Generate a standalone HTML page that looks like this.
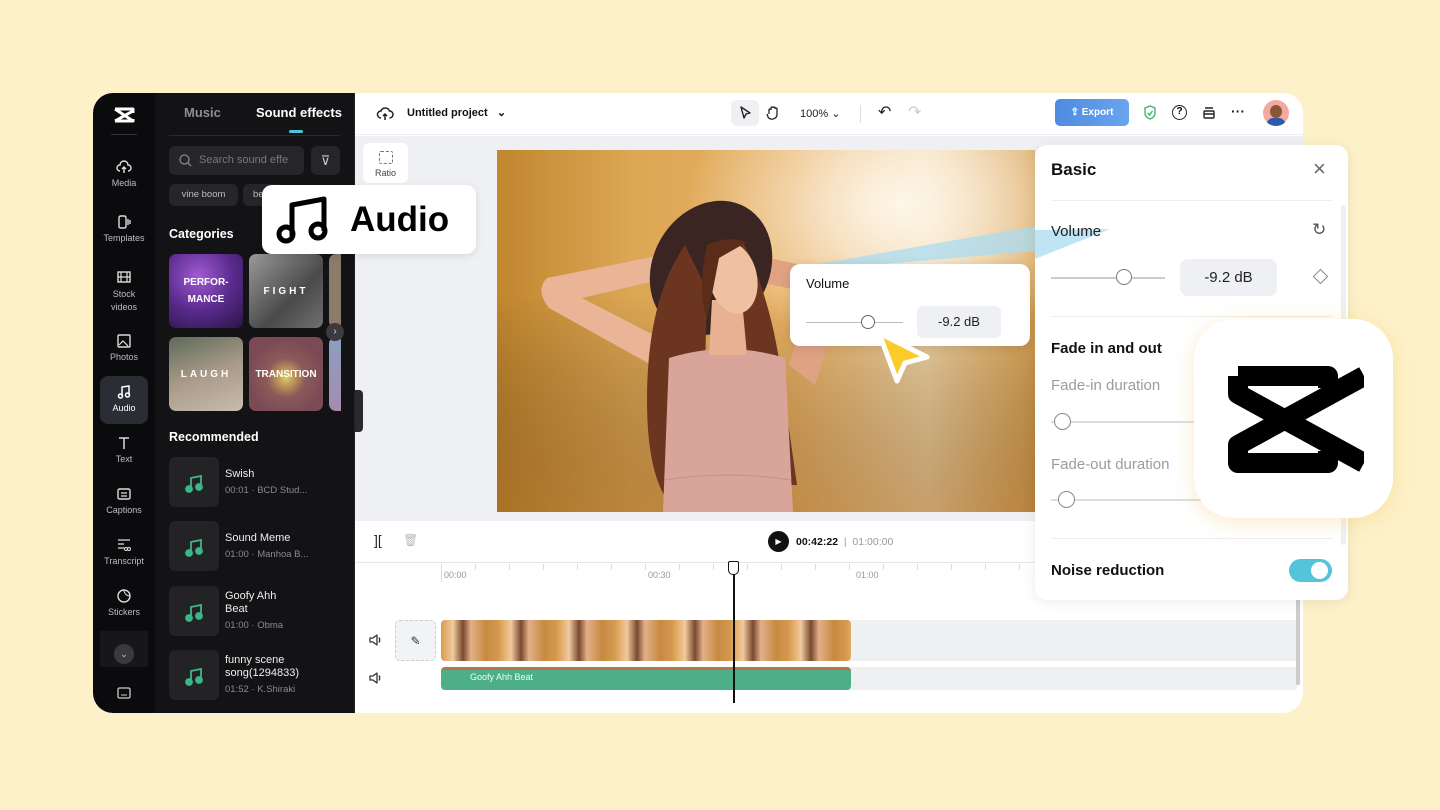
<!DOCTYPE html>
<html><head><meta charset="utf-8"><style>
*{box-sizing:border-box;margin:0;padding:0}
body{width:1440px;height:810px;background:#fdf1c9;font-family:"Liberation Sans",sans-serif;position:relative;overflow:hidden}
.a{position:absolute}
.win{left:93px;top:93px;width:1210px;height:620px;border-radius:20px;overflow:hidden;background:#fff}
.nav{left:0;top:0;width:62px;height:620px;background:#0b0b0d}
.ni{position:absolute;left:0;width:62px;text-align:center;color:#bdbdc2;font-size:9px}
.ni svg{display:block;margin:0 auto 3px}
.sp{left:62px;top:0;width:200px;height:620px;background:#131316;border-right:1px solid #222}
.w{color:#fff}
.tile{position:absolute;width:74px;height:74px;border-radius:7px;color:#fff;font-size:10px;font-weight:bold;display:flex;align-items:center;justify-content:center;text-align:center;line-height:17px}
.rec{position:absolute;left:14px;width:200px;height:52px}
.rec .ic{position:absolute;left:0;top:0;width:50px;height:50px;background:#232326;border-radius:6px}
.rec .t{position:absolute;left:56px;color:#eee;font-size:11px;line-height:13px}
.rec .s{position:absolute;left:56px;color:#8a8a8f;font-size:9.5px}
</style></head><body>
<div class="a win">
 <div class="a nav">
  <svg class="a" style="left:19px;top:12px" width="24" height="22" viewBox="0 0 24 22"><path d="M3 4h18v4M3 4v0L21 16M21 6L3 16v0M3 16h18v-2" stroke="#fff" stroke-width="3" fill="none" stroke-linejoin="round"/></svg>
  <div class="a" style="left:18px;top:41px;width:26px;height:1px;background:#333"></div>
  <div class="ni" style="top:66px"><svg width="16" height="16" viewBox="0 0 16 16"><path d="M4 12a3 3 0 0 1 0-6a4 4 0 0 1 8 0a3 3 0 0 1 0 6M8 14V8M6 10l2-2l2 2" stroke="#ddd" fill="none" stroke-width="1.4"/></svg>Media</div>
  <div class="ni" style="top:121px"><svg width="16" height="16" viewBox="0 0 16 16"><rect x="3" y="2" width="7" height="12" rx="1.5" stroke="#ddd" fill="none" stroke-width="1.4"/><path d="M12 5v6M14 6v4" stroke="#ddd" stroke-width="1.4"/></svg>Templates</div>
  <div class="ni" style="top:176px;line-height:13px"><svg width="16" height="16" viewBox="0 0 16 16"><rect x="2" y="3" width="12" height="10" stroke="#ddd" fill="none" stroke-width="1.4"/><path d="M5 3v10M11 3v10M2 8h12" stroke="#ddd" stroke-width="1.2"/></svg>Stock<br>videos</div>
  <div class="ni" style="top:240px"><svg width="16" height="16" viewBox="0 0 16 16"><rect x="2" y="2" width="12" height="12" rx="1" stroke="#ddd" fill="none" stroke-width="1.4"/><path d="M3 12l4-4l5 5" stroke="#ddd" fill="none" stroke-width="1.2"/></svg>Photos</div>
  <div class="a" style="left:7px;top:283px;width:48px;height:48px;border-radius:8px;background:#2a2d33"></div>
  <div class="ni" style="top:291px;color:#fff"><svg width="16" height="16" viewBox="0 0 16 16"><path d="M6 12V3l7-1v9" stroke="#fff" fill="none" stroke-width="1.5"/><circle cx="4.5" cy="12" r="2" stroke="#fff" fill="none" stroke-width="1.5"/><circle cx="11.5" cy="11" r="2" stroke="#fff" fill="none" stroke-width="1.5"/></svg>Audio</div>
  <div class="ni" style="top:342px"><svg width="16" height="16" viewBox="0 0 16 16"><path d="M3 3h10M8 3v11" stroke="#ddd" stroke-width="1.5"/></svg>Text</div>
  <div class="ni" style="top:393px"><svg width="16" height="16" viewBox="0 0 16 16"><rect x="2" y="3" width="12" height="10" rx="1.5" stroke="#ddd" fill="none" stroke-width="1.4"/><path d="M5 7h6M5 10h6" stroke="#ddd" stroke-width="1.2"/></svg>Captions</div>
  <div class="ni" style="top:444px"><svg width="16" height="16" viewBox="0 0 16 16"><path d="M2 3h12M2 7h6M2 11h6" stroke="#ddd" stroke-width="1.3"/><circle cx="10" cy="12" r="1.5" stroke="#ddd" fill="none"/><circle cx="13" cy="12" r="1.5" stroke="#ddd" fill="none"/></svg>Transcript</div>
  <div class="ni" style="top:495px"><svg width="16" height="16" viewBox="0 0 16 16"><circle cx="8" cy="8" r="6" stroke="#ddd" fill="none" stroke-width="1.4"/><path d="M8 2a6 6 0 0 0 6 6" stroke="#ddd" fill="none"/></svg>Stickers</div>
  <div class="a" style="left:7px;top:538px;width:48px;height:36px;background:#17171a"></div>
  <div class="a" style="left:21px;top:551px;width:20px;height:20px;border-radius:50%;background:#3a3a3e;color:#ccc;font-size:9px;text-align:center;line-height:20px">⌄</div>
  <svg class="a" style="left:24px;top:594px" width="14" height="12" viewBox="0 0 14 12"><rect x="1" y="1" width="12" height="10" rx="1.5" stroke="#ccc" fill="none" stroke-width="1.3"/><path d="M4 8h6" stroke="#ccc"/></svg>
 </div>
 <div class="a sp">
  <div class="a" style="left:29px;top:12px;color:#8d8d92;font-size:13px;font-weight:bold">Music</div>
  <div class="a w" style="left:101px;top:12px;font-size:13px;font-weight:bold">Sound effects</div>
  <div class="a" style="left:134px;top:37px;width:14px;height:3px;border-radius:2px;background:#4ec3dc"></div>
  <div class="a" style="left:14px;top:42px;width:171px;height:1px;background:#2a2a2d"></div>
  <div class="a" style="left:14px;top:53px;width:135px;height:29px;border-radius:6px;background:#26262a;color:#77777c;font-size:11px;line-height:29px;padding-left:30px">Search sound effe</div>
  <svg class="a" style="left:24px;top:61px" width="13" height="13" viewBox="0 0 13 13"><circle cx="5.5" cy="5.5" r="4.5" stroke="#888" fill="none" stroke-width="1.3"/><path d="M9 9l3 3" stroke="#888" stroke-width="1.3"/></svg>
  <div class="a" style="left:156px;top:53px;width:29px;height:29px;border-radius:6px;background:#26262a;color:#ccc;font-size:13px;text-align:center;line-height:29px">⊽</div>
  <div class="a" style="left:14px;top:91px;width:69px;height:22px;border-radius:6px;background:#26262a;color:#bbb;font-size:9.5px;text-align:center;line-height:22px">vine boom</div>
  <div class="a" style="left:88px;top:91px;width:40px;height:22px;border-radius:6px;background:#26262a;color:#bbb;font-size:9.5px;line-height:22px;padding-left:10px">be</div>
  <div class="a w" style="left:14px;top:134px;font-size:12.5px;font-weight:bold">Categories</div>
  <div class="tile" style="left:14px;top:161px;background:radial-gradient(circle at 40% 30%,#a15bd3,#5a2b8e 50%,#2b1445)">PERFOR-<br>MANCE</div>
  <div class="tile" style="left:94px;top:161px;background:linear-gradient(135deg,#9a9a9a,#4a4a4a 60%,#707070);letter-spacing:3px">FIGHT</div>
  <div class="tile" style="left:174px;top:161px;width:12px;background:#8c7a6a;border-radius:7px 0 0 7px"></div>
  <div class="tile" style="left:14px;top:244px;background:linear-gradient(160deg,#5e6a5a,#a99a88 50%,#c8bcae);letter-spacing:3px">LAUGH</div>
  <div class="tile" style="left:94px;top:244px;background:radial-gradient(circle at 50% 55%,#d8cf6a 0,#c5a05a 12%,#8d5a5a 35%,#7a4a55 70%)">TRANSITION</div>
  <div class="tile" style="left:174px;top:244px;width:12px;background:linear-gradient(#8aa0c0,#a88ab0);border-radius:7px 0 0 7px"></div>
  <div class="a" style="left:171px;top:230px;width:18px;height:18px;border-radius:50%;background:#3a3a3f;color:#ddd;font-size:10px;text-align:center;line-height:18px">›</div>
  <div class="a w" style="left:14px;top:337px;font-size:12.5px;font-weight:bold">Recommended</div>
  <div class="rec" style="top:364px"><div class="ic"></div><div class="t" style="top:11px">Swish</div><div class="s" style="top:28px">00:01 · BCD Stud...</div></div>
  <div class="rec" style="top:428px"><div class="ic"></div><div class="t" style="top:11px">Sound Meme</div><div class="s" style="top:28px">01:00 · Manhoa B...</div></div>
  <div class="rec" style="top:493px"><div class="ic"></div><div class="t" style="top:4px">Goofy Ahh<br>Beat</div><div class="s" style="top:34px">01:00 · Obma</div></div>
  <div class="rec" style="top:557px"><div class="ic"></div><div class="t" style="top:4px">funny scene<br>song(1294833)</div><div class="s" style="top:34px">01:52 · K.Shiraki</div></div>
 </div>
 <svg class="a" style="left:92px;top:381px" width="20" height="260" viewBox="0 0 20 260">
  <g fill="#3cb58a" stroke="#3cb58a" stroke-width="1.8"><g id="n"><path d="M6 15V4l10-2v11" fill="none"/><circle cx="4" cy="15" r="3"/><circle cx="14" cy="13" r="3"/></g>
  <use href="#n" y="64"/><use href="#n" y="129"/><use href="#n" y="193"/></g>
 </svg>
 <div class="a" style="left:262px;top:0;width:948px;height:42px;background:#fff;border-bottom:1px solid #eceef1"></div>
 <svg class="a" style="left:283px;top:12px" width="18" height="18" viewBox="0 0 18 18"><path d="M5 13a3.5 3.5 0 0 1 0-7a4.5 4.5 0 0 1 8.5 0a3.5 3.5 0 0 1 0 7M9 15V9M7 11l2-2l2 2" stroke="#222" fill="none" stroke-width="1.5"/></svg>
 <div class="a" style="left:314px;top:13px;font-size:11px;font-weight:bold;color:#111">Untitled project &nbsp;&nbsp;⌄</div>
 <div class="a" style="left:638px;top:7px;width:28px;height:26px;border-radius:6px;background:#eef0f3"></div>
 <svg class="a" style="left:645px;top:13px" width="14" height="14" viewBox="0 0 14 14"><path d="M3 1l9 6l-4 1l-2 4z" stroke="#222" fill="none" stroke-width="1.4" stroke-linejoin="round"/></svg>
 <svg class="a" style="left:673px;top:12px" width="14" height="16" viewBox="0 0 14 16"><path d="M3 9V5a1 1 0 0 1 2 0V3a1 1 0 0 1 2 0v0a1 1 0 0 1 2 0v1a1 1 0 0 1 2 0v6a5 5 0 0 1-9 2l-1-3" stroke="#222" fill="none" stroke-width="1.3"/></svg>
 <div class="a" style="left:707px;top:14px;font-size:11px;color:#222">100% ⌄</div>
 <div class="a" style="left:767px;top:12px;width:1px;height:18px;background:#ddd"></div>
 <div class="a" style="left:785px;top:9px;font-size:16px;color:#222">↶</div>
 <div class="a" style="left:815px;top:9px;font-size:16px;color:#ccc">↷</div>
 <div class="a" style="left:962px;top:6px;width:74px;height:27px;border-radius:5px;background:linear-gradient(90deg,#4f8be0,#6aa4ee);color:#fff;font-size:10px;font-weight:bold;text-align:center;line-height:27px">⇪ Export</div>
 <svg class="a" style="left:1050px;top:12px" width="14" height="16" viewBox="0 0 14 16"><path d="M7 1l5 2v5c0 3-2 5-5 6c-3-1-5-3-5-6V3z" stroke="#3cb56a" fill="none" stroke-width="1.4"/><path d="M4.5 8l2 2l3-4" stroke="#3cb56a" fill="none" stroke-width="1.4"/></svg>
 <div class="a" style="left:1079px;top:12px;width:15px;height:15px;border:1.5px solid #222;border-radius:50%;font-size:10px;font-weight:bold;text-align:center;line-height:12px">?</div>
 <svg class="a" style="left:1109px;top:13px" width="14" height="14" viewBox="0 0 14 14"><rect x="2" y="5" width="10" height="7" rx="1" stroke="#222" fill="none" stroke-width="1.4"/><path d="M3 2h8M2 8h10" stroke="#222" stroke-width="1.4"/></svg>
 <div class="a" style="left:1138px;top:10px;font-size:14px;font-weight:bold;color:#222">···</div>
 <div class="a" style="left:1170px;top:7px;width:26px;height:26px;border-radius:50%;background:#f3a9a0;overflow:hidden"><div class="a" style="left:7px;top:5px;width:12px;height:13px;border-radius:50%;background:#8a5638"></div><div class="a" style="left:4px;top:18px;width:18px;height:10px;border-radius:6px 6px 0 0;background:#2a5ab0"></div></div>
 <div class="a" style="left:262px;top:43px;width:948px;height:385px;background:#eef0f3"></div>
 <div class="a" style="left:270px;top:50px;width:45px;height:40px;border-radius:6px;background:#fff;text-align:center;font-size:9px;color:#444;padding-top:8px"><div style="width:14px;height:13px;border:1.2px dashed #777;border-radius:2px;margin:0 auto 4px"></div>Ratio</div>
 <div class="a" style="left:262px;top:297px;width:8px;height:42px;border-radius:0 4px 4px 0;background:#2a2a2e"></div>
 <svg class="a" style="left:404px;top:57px" width="538" height="362" viewBox="0 0 538 362">
  <defs><linearGradient id="bg" x1="0" y1="0" x2="1" y2="0"><stop offset="0" stop-color="#c1862e"/><stop offset=".25" stop-color="#dca654"/><stop offset=".55" stop-color="#e8b165"/><stop offset=".8" stop-color="#f0d3a3"/><stop offset="1" stop-color="#d9a253"/></linearGradient>
  <radialGradient id="lt" cx=".75" cy=".15" r=".4"><stop offset="0" stop-color="#fff8ec" stop-opacity=".95"/><stop offset="1" stop-color="#fff" stop-opacity="0"/></radialGradient>
  <linearGradient id="bot" x1="0" y1="0" x2="0" y2="1"><stop offset=".4" stop-color="#000" stop-opacity="0"/><stop offset="1" stop-color="#8a5418" stop-opacity=".4"/></linearGradient></defs>
  <rect width="538" height="362" fill="url(#bg)"/><rect width="538" height="362" fill="url(#lt)"/><rect width="538" height="362" fill="url(#bot)"/>
  <path d="M200 98L50 128Q38 140 52 158L160 218L178 196L85 148L205 120Z" fill="#e9b596"/>
  <path d="M258 105L318 118Q340 128 338 170L318 235L292 215L308 160L300 140L262 132Z" fill="#dfa283"/>
  <ellipse cx="214" cy="118" rx="58" ry="70" transform="rotate(30 214 118)" fill="#3b2523"/>
  <path d="M188 95Q150 150 150 250Q150 320 170 350L205 345L210 140Z" fill="#6b3520"/>
  <path d="M245 90Q275 150 285 230Q295 300 300 335L262 335L240 150Z" fill="#6b3520"/>
  <path d="M172 208Q230 190 288 208L296 362H166Z" fill="#d9a59a"/>
  <path d="M168 330Q230 320 294 330" stroke="#c4908a" fill="none"/>
  <path d="M215 150L245 150L250 205L212 205Z" fill="#e8b192"/>
  <ellipse cx="236" cy="128" rx="24" ry="36" transform="rotate(-12 236 128)" fill="#f0c0a2"/>
  <path d="M210 95Q230 85 250 92L222 108L210 170Q200 140 210 95Z" fill="#5a2c1a"/>
 </svg>
 <!-- beam -->
 <svg class="a" style="left:719px;top:130px" width="224" height="50" viewBox="0 0 224 50"><path d="M0 42L224 3V28L60 42Z" fill="#a9dcf2" opacity=".75"/></svg>
 <div class="a" style="left:697px;top:171px;width:240px;height:82px;border-radius:10px;background:#fff;box-shadow:0 2px 10px rgba(0,0,0,.12)">
  <div class="a" style="left:16px;top:12px;font-size:13px;color:#111">Volume</div>
  <div class="a" style="left:16px;top:58px;width:97px;height:1px;background:#bbb"></div>
  <div class="a" style="left:71px;top:51px;width:14px;height:14px;border-radius:50%;background:#fff;border:1.5px solid #666"></div>
  <div class="a" style="left:127px;top:42px;width:84px;height:32px;border-radius:6px;background:#eef0f3;font-size:13px;color:#222;text-align:center;line-height:32px">-9.2 dB</div>
 </div>
 <svg class="a" style="left:778px;top:234px" width="65" height="60" viewBox="0 0 65 60"><path d="M8 6L56 30L34 36L26 54Z" fill="#fbcb2c" stroke="#fff" stroke-width="5" stroke-linejoin="round"/></svg>
 <div class="a" style="left:262px;top:428px;width:948px;height:42px;background:#fff;border-bottom:1px solid #e6e8eb"></div>
 <div class="a" style="left:281px;top:439px;font-size:14px;color:#222">][</div>
 <div class="a" style="left:310px;top:440px;font-size:12px;color:#bbb">🗑</div>
 <div class="a" style="left:675px;top:438px;width:21px;height:21px;border-radius:50%;background:#111;color:#fff;font-size:8px;text-align:center;line-height:21px">▶</div>
 <div class="a" style="left:703px;top:443px;font-size:10.5px;font-weight:bold;color:#111">00:42:22 <span style="font-weight:normal;color:#999">&nbsp;|&nbsp; 01:00:00</span></div>
 <div class="a" style="left:348px;top:471px;width:1px;height:18px;background:#ddd"></div>
 <div class="a" style="left:351px;top:477px;font-size:9px;color:#999">00:00</div>
 <div class="a" style="left:555px;top:477px;font-size:9px;color:#999">00:30</div>
 <div class="a" style="left:763px;top:477px;font-size:9px;color:#999">01:00</div>
 <div class="a" style="left:348px;top:471px;width:620px;height:6px;background:repeating-linear-gradient(90deg,#ddd 0 1px,transparent 1px 34px)"></div>
 <div class="a" style="left:302px;top:527px;width:41px;height:41px;border-radius:5px;border:1px dashed #ccc;background:#f2f3f5;text-align:center;line-height:40px;font-size:12px;color:#333">✎</div>
 <svg class="a" style="left:275px;top:540px" width="14" height="14" viewBox="0 0 14 14"><path d="M2 5h3l4-3v10l-4-3H2z" stroke="#333" fill="none" stroke-width="1.3" stroke-linejoin="round"/><path d="M11 4.5q1.5 2.5 0 5" stroke="#333" fill="none" stroke-width="1.3"/></svg>
 <svg class="a" style="left:275px;top:578px" width="14" height="14" viewBox="0 0 14 14"><path d="M2 5h3l4-3v10l-4-3H2z" stroke="#333" fill="none" stroke-width="1.3" stroke-linejoin="round"/><path d="M11 4.5q1.5 2.5 0 5" stroke="#333" fill="none" stroke-width="1.3"/></svg>
 <div class="a" style="left:348px;top:527px;width:856px;height:41px;background:#eef0f2;border-radius:3px"></div>
 <div class="a" style="left:348px;top:527px;width:410px;height:41px;border-radius:4px;background:repeating-linear-gradient(90deg,#d99c4a 0,#f0caa0 12px,#7a4a30 22px,#e2b08a 30px,#c88a40 45px,#d49a52 58px)"></div>
 <div class="a" style="left:348px;top:574px;width:856px;height:23px;background:#eef0f2;border-radius:3px"></div>
 <div class="a" style="left:348px;top:574px;width:410px;height:23px;border-radius:4px;background:#4daf88;border-top:3px solid #c2704a"></div>
 <div class="a" style="left:377px;top:579px;font-size:9px;color:#eafff4">Goofy Ahh Beat</div>
 <div class="a" style="left:640px;top:470px;width:1.5px;height:140px;background:#111"></div>
 <div class="a" style="left:635px;top:468px;width:11px;height:14px;border:1.5px solid #111;border-radius:2px 2px 5px 5px;background:#fff"></div>
 <div class="a" style="left:1203px;top:500px;width:4px;height:92px;border-radius:2px;background:#ccc"></div>
</div>
<div class="a" style="left:262px;top:185px;width:214px;height:69px;border-radius:10px;background:#fff;box-shadow:0 2px 8px rgba(0,0,0,.1)"></div>
<svg class="a" style="left:276px;top:196px" width="54" height="48" viewBox="0 0 54 48"><path d="M16 40V9l32-6v32" stroke="#000" stroke-width="5" fill="none" stroke-linejoin="round"/><circle cx="10" cy="38" r="7" stroke="#000" stroke-width="5" fill="none"/><circle cx="42" cy="35" r="7" stroke="#000" stroke-width="5" fill="none"/></svg>
<div class="a" style="left:350px;top:200px;font-size:35px;font-weight:bold;color:#000">Audio</div>
<div class="a" style="left:1035px;top:145px;width:313px;height:455px;border-radius:12px;background:#fff;box-shadow:0 2px 14px rgba(0,0,0,.08)">
 <div class="a" style="left:16px;top:15px;font-size:17px;font-weight:bold;color:#111">Basic</div>
 <div class="a" style="left:278px;top:11px;font-size:22px;color:#666">×</div>
 <div class="a" style="left:16px;top:55px;width:282px;height:1px;background:#eee"></div>
 <div class="a" style="left:306px;top:60px;width:5px;height:340px;background:#eef0f2;border-radius:3px"></div>
 <svg class="a" style="left:0;top:78px" width="75" height="40" viewBox="0 0 75 40"><path d="M0 7L75 6L0 36Z" fill="#a9dcf2" opacity=".75"/></svg>
 <div class="a" style="left:16px;top:78px;font-size:15px;color:#222">Volume</div>
 <div class="a" style="left:277px;top:75px;font-size:17px;color:#555">↻</div>
 <div class="a" style="left:16px;top:132px;width:114px;height:1.5px;background:#ccc"></div>
 <div class="a" style="left:81px;top:124px;width:16px;height:16px;border-radius:50%;background:#fff;border:1.5px solid #777"></div>
 <div class="a" style="left:145px;top:114px;width:97px;height:37px;border-radius:8px;background:#eef0f3;font-size:15px;color:#222;text-align:center;line-height:37px">-9.2 dB</div>
 <div class="a" style="left:280px;top:126px;width:11px;height:11px;border:1.3px solid #888;transform:rotate(45deg)"></div>
 <div class="a" style="left:16px;top:171px;width:282px;height:1px;background:#eee"></div>
 <div class="a" style="left:16px;top:195px;font-size:15px;font-weight:bold;color:#111">Fade in and out</div>
 <div class="a" style="left:16px;top:232px;font-size:15px;color:#9a9ca2">Fade-in duration</div>
 <div class="a" style="left:16px;top:276px;width:160px;height:2px;background:#ddd"></div>
 <div class="a" style="left:19px;top:268px;width:17px;height:17px;border-radius:50%;background:#fff;border:1.5px solid #888"></div>
 <div class="a" style="left:16px;top:311px;font-size:15px;color:#9a9ca2">Fade-out duration</div>
 <div class="a" style="left:16px;top:354px;width:160px;height:2px;background:#ddd"></div>
 <div class="a" style="left:23px;top:346px;width:17px;height:17px;border-radius:50%;background:#fff;border:1.5px solid #888"></div>
 <div class="a" style="left:16px;top:393px;width:282px;height:1px;background:#eee"></div>
 <div class="a" style="left:16px;top:417px;font-size:15px;font-weight:bold;color:#111">Noise reduction</div>
 <div class="a" style="left:254px;top:414px;width:43px;height:23px;border-radius:12px;background:#55c3d9"><div class="a" style="left:22px;top:3px;width:17px;height:17px;border-radius:50%;background:#fff"></div></div>
</div>
<div class="a" style="left:1194px;top:319px;width:199px;height:199px;border-radius:40px;background:#fff;box-shadow:0 4px 20px rgba(240,200,100,.35)"></div>
<svg class="a" style="left:1228px;top:366px" width="136" height="107" viewBox="0 0 136 107"><path d="M10 10H100V22M10 10V28L136 97M136 10L10 79V97H100V85" stroke="#000" stroke-width="20" fill="none" stroke-linejoin="round"/></svg>
</body></html>
